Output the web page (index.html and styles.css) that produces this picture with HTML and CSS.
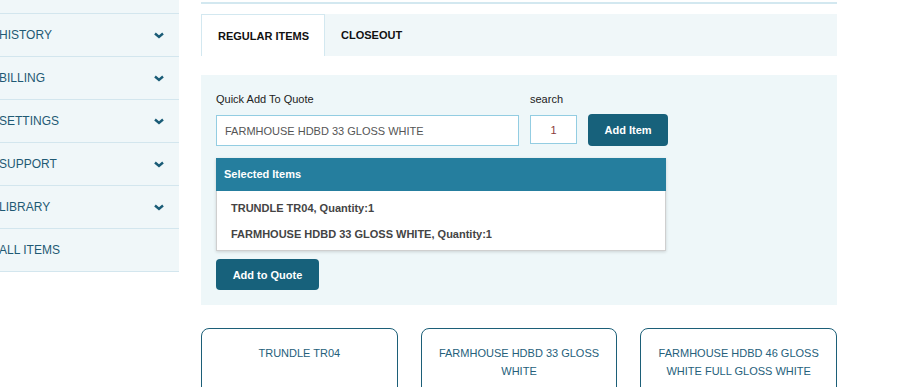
FILE: index.html
```html
<!DOCTYPE html>
<html lang="en">
<head>
    <meta charset="UTF-8">
    <meta name="viewport" content="width=device-width, initial-scale=1.0">
    <title>Quick Quote</title>
    <link rel="stylesheet" href="styles.css">
</head>
<body>
    <div class="page">
        <aside class="sidebar">
            <ul class="side-menu">
                <li class="side-item"><span>HISTORY</span><svg class="chev" width="10" height="7" viewBox="0 0 10 7"><polyline points="1,1.5 5,5 9,1.5" fill="none" stroke="#1a5c77" stroke-width="2.4"/></svg></li>
                <li class="side-item"><span>BILLING</span><svg class="chev" width="10" height="7" viewBox="0 0 10 7"><polyline points="1,1.5 5,5 9,1.5" fill="none" stroke="#1a5c77" stroke-width="2.4"/></svg></li>
                <li class="side-item"><span>SETTINGS</span><svg class="chev" width="10" height="7" viewBox="0 0 10 7"><polyline points="1,1.5 5,5 9,1.5" fill="none" stroke="#1a5c77" stroke-width="2.4"/></svg></li>
                <li class="side-item"><span>SUPPORT</span><svg class="chev" width="10" height="7" viewBox="0 0 10 7"><polyline points="1,1.5 5,5 9,1.5" fill="none" stroke="#1a5c77" stroke-width="2.4"/></svg></li>
                <li class="side-item"><span>LIBRARY</span><svg class="chev" width="10" height="7" viewBox="0 0 10 7"><polyline points="1,1.5 5,5 9,1.5" fill="none" stroke="#1a5c77" stroke-width="2.4"/></svg></li>
                <li class="side-item"><span>ALL ITEMS</span></li>
            </ul>
        </aside>

        <main class="content">
            <div class="tabs">
                <div class="tab active">REGULAR ITEMS</div>
                <div class="tab">CLOSEOUT</div>
            </div>

            <section class="quick-add">
                <div class="qa-row">
                    <div class="field field-item">
                        <label for="itemName">Quick Add To Quote</label>
                        <input type="text" id="itemName" class="item-input" value="FARMHOUSE HDBD 33 GLOSS WHITE">
                    </div>
                    <div class="field field-qty">
                        <label for="qty">search</label>
                        <input type="text" id="qty" class="qty-input" value="1">
                    </div>
                    <button type="button" class="btn add-item">Add Item</button>
                </div>

                <div class="selected">
                    <div class="selected-head">Selected Items</div>
                    <div class="selected-body">
                        <p>TRUNDLE TR04, Quantity:1</p>
                        <p>FARMHOUSE HDBD 33 GLOSS WHITE, Quantity:1</p>
                    </div>
                </div>

                <button type="button" class="btn add-quote">Add to Quote</button>
            </section>

            <div class="cards">
                <div class="card">TRUNDLE TR04</div>
                <div class="card">FARMHOUSE HDBD 33 GLOSS WHITE</div>
                <div class="card">FARMHOUSE HDBD 46 GLOSS WHITE FULL GLOSS WHITE</div>
            </div>
        </main>
    </div>
</body>
</html>
```

FILE: styles.css
```css
body {
    margin: 0;
    font-family: 'Liberation Sans', Arial, sans-serif;
    background: #fff;
    color: #333;
    height: 387px;
    overflow: hidden;
}
.page {
    display: flex;
    gap: 22px;
    align-items: flex-start;
}
.sidebar {
    width: 179px;
    flex-shrink: 0;
    background: #f0f7f9;
}
.side-menu {
    list-style: none;
    margin: 0;
    padding: 13px 0 0 0;
    border-bottom: 1px solid #d3e6ee;
}
.side-item {
    display: flex;
    align-items: center;
    justify-content: space-between;
    height: 42px;
    border-top: 1px solid #d3e6ee;
    padding: 0 15px 0 0;
    font-size: 12px;
    color: #1f5a74;
    text-indent: -1px;
}
.side-item span {
    margin-top: -1px;
}
.content {
    width: 636px;
    padding-top: 2px;
}
.content::before {
    content: "";
    display: block;
    height: 2px;
    background: #d3e8f0;
    margin-bottom: 10px;
}
.tabs {
    display: flex;
    height: 42px;
    margin-bottom: 19px;
    background: #f0f7f9;
}
.tab {
    padding: 0 16px;
    font-size: 11px;
    font-weight: bold;
    color: #111;
    display: flex;
    align-items: center;
}
.tab.active {
    background: #fff;
    border: 1px solid #d3e8f0;
    border-bottom: none;
    padding-right: 15px;
}
.quick-add {
    background: #eef7f9;
    padding: 18px 15px 15px 15px;
}
.qa-row {
    display: flex;
    align-items: flex-end;
    gap: 11px;
}
.field label {
    display: block;
    font-size: 11px;
    color: #222;
    margin-bottom: 10px;
}
.item-input {
    display: block;
    width: 303px;
    height: 31px;
    box-sizing: border-box;
    border: 1px solid #93cde2;
    padding: 0 8px;
    font-family: inherit;
    font-size: 11px;
    color: #555;
    background: #fff;
}
.qty-input {
    display: block;
    width: 47px;
    height: 29px;
    box-sizing: border-box;
    border: 1px solid #93cde2;
    text-align: center;
    font-family: inherit;
    font-size: 11px;
    color: #8a3b3b;
    background: #fff;
    margin-bottom: 2px;
}
.btn {
    background: #17617b;
    color: #fff;
    border: none;
    border-radius: 4px;
    font-family: inherit;
    font-size: 11px;
    font-weight: bold;
    cursor: pointer;
}
.add-item {
    width: 80px;
    height: 32px;
}
.add-quote {
    width: 103px;
    height: 31px;
    margin-top: 8px;
    display: block;
}
.selected {
    width: 450px;
    margin-top: 12px;
    box-shadow: 0 1px 3px rgba(0,0,0,0.15);
}
.selected-head {
    background: #257e9e;
    color: #fff;
    font-size: 11px;
    font-weight: bold;
    height: 33px;
    line-height: 33px;
    padding-left: 8px;
}
.selected-body {
    background: #fff;
    border: 1px solid #cfcfcf;
    border-top: none;
    padding: 5px 14px 2px 14px;
}
.selected-body p {
    margin: 0;
    height: 26px;
    line-height: 24px;
    font-size: 11px;
    font-weight: bold;
    color: #444;
}
.cards {
    display: flex;
    gap: 23px;
    margin-top: 23px;
}
.card {
    flex: 1;
    height: 80px;
    border: 1px solid #1c5f78;
    border-radius: 8px;
    padding: 15px 12px 0 12px;
    text-align: center;
    font-size: 11px;
    line-height: 18px;
    color: #25607b;
}
```
